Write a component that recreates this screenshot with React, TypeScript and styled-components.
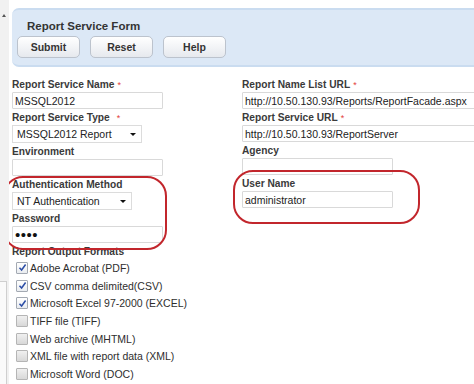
import styled, { createGlobalStyle } from 'styled-components';

const GlobalStyle = createGlobalStyle`
  html, body {
    margin: 0;
    padding: 0;
    background: #ffffff;
  }
  body {
    font-family: "Liberation Sans", Arial, sans-serif;
  }
`;

// 페이지 전체.
const Page = styled.div`
  display: flex;
  width: 474px;
  height: 384px;
  overflow: hidden;
  background: #ffffff;
`;

const SideRail = styled.div`
  width: 9px;
  flex: none;
  display: flex;
  flex-direction: column;
  background: #f1f1f1;
`;

const RailArrow = styled.div`
  margin: 14px 0 0 2px;
  width: 0;
  height: 0;
  border-left: 2.5px solid transparent;
  border-right: 2.5px solid transparent;
  border-bottom: 3px solid #555;
`;

const RailPanel = styled.div`
  margin-top: 264px;
  flex: 1;
  width: 6px;
  background: #fafafa;
  border-top: 1px solid #cfcfcf;
  border-right: 1px solid #cfcfcf;
`;

const Main = styled.div`
  flex: 1;
  min-width: 0;
  padding: 8px 0 0 3px;
  overflow: hidden;
`;

const Header = styled.div`
  margin-right: -10px;
  padding: 9px 0 7px 5px;
  background: #dce8f6;
  border-top: 2px solid #cadcf0;
  border-bottom: 2px solid #cadcf0;
  border-radius: 7px 0 0 7px;
`;

const Title = styled.div`
  padding-left: 10px;
  font-size: 11.5px;
  line-height: 14px;
  font-weight: bold;
  color: #343434;
`;

const Toolbar = styled.div`
  display: flex;
  gap: 10px;
  margin-top: 3px;
`;

const Button = styled.button`
  width: 63px;
  height: 22px;
  padding: 0;
  font-family: "Liberation Sans", Arial, sans-serif;
  font-size: 10.5px;
  font-weight: bold;
  color: #333;
  background: linear-gradient(#ffffff, #e6e9ee);
  border: 1px solid #bcc3cd;
  border-radius: 5px;
`;

const FormGrid = styled.div`
  display: grid;
  grid-template-columns: 230px 1fr;
  margin-top: 12px;
`;

const Column = styled.div`
  display: flex;
  flex-direction: column;
  min-width: 0;
`;

const Field = styled.div`
  display: flex;
  flex-direction: column;
  align-items: flex-start;
  margin-bottom: 3px;
`;

const Label = styled.div`
  font-size: 10.2px;
  line-height: 12px;
  font-weight: bold;
  color: #3a3a3a;
  margin-bottom: 1px;
  white-space: nowrap;
`;

const Required = styled.span<{ gap: number }>`
  color: #e3403a;
  font-size: 9px;
  font-weight: normal;
  margin-left: ${(p) => p.gap}px;
`;

const TextInput = styled.input<{ w: number }>`
  box-sizing: border-box;
  width: ${(p) => p.w}px;
  height: 17px;
  padding: 0 2px;
  margin: 0;
  font-family: "Liberation Sans", Arial, sans-serif;
  font-size: 10.5px;
  color: #222;
  background: #fff;
  border: 1px solid #d9d9d9;
  border-radius: 1px;
  outline: none;
`;

const PasswordInput = styled(TextInput)`
  font-size: 15px;
  letter-spacing: 0.5px;
  color: #111;
`;

const Select = styled.div<{ w: number }>`
  box-sizing: border-box;
  width: ${(p) => p.w}px;
  height: 18px;
  display: flex;
  align-items: center;
  justify-content: space-between;
  padding: 0 5px 0 4px;
  font-size: 10.5px;
  color: #222;
  background: #fff;
  border: 1px solid #dcdcdc;
  white-space: nowrap;
`;

const Caret = styled.span`
  width: 0;
  height: 0;
  border-left: 3px solid transparent;
  border-right: 3px solid transparent;
  border-top: 3px solid #111;
`;

// 빨간 타원 강조 표시.
const Highlight = styled.div<{ t: number; r: number; b: number; l: number }>`
  position: relative;
  align-self: flex-start;
  &::after {
    content: '';
    position: absolute;
    top: ${(p) => -p.t}px;
    right: ${(p) => -p.r}px;
    bottom: ${(p) => -p.b}px;
    left: ${(p) => -p.l}px;
    border: 2px solid #c2262c;
    border-radius: 20px;
    pointer-events: none;
  }
`;

const CheckList = styled.div`
  display: flex;
  flex-direction: column;
  padding-left: 4px;
`;

const CheckRow = styled.div`
  display: flex;
  align-items: center;
  height: 17.7px;
  gap: 2px;
  font-size: 10.5px;
  color: #2e2e2e;
  white-space: nowrap;
`;

const Box = styled.span<{ checked: boolean }>`
  box-sizing: border-box;
  width: 12px;
  height: 12px;
  display: flex;
  align-items: center;
  justify-content: center;
  border: 1px solid ${(p) => (p.checked ? '#a3a9b2' : '#b5b5b5')};
  border-radius: 1px;
  background: ${(p) =>
    p.checked ? 'linear-gradient(#ffffff, #e9ecf0)' : 'linear-gradient(#f0f0f0, #d8d8d8)'};
`;

const formats = [
  { text: 'Adobe Acrobat (PDF)', checked: true },
  { text: 'CSV comma delimited(CSV)', checked: true },
  { text: 'Microsoft Excel 97-2000 (EXCEL)', checked: true },
  { text: 'TIFF file (TIFF)', checked: false },
  { text: 'Web archive (MHTML)', checked: false },
  { text: 'XML file with report data (XML)', checked: false },
  { text: 'Microsoft Word (DOC)', checked: false },
];

const Check = ({ checked }: { checked: boolean }) => (
  <Box checked={checked}>
    {checked && (
      <svg width="9" height="9" viewBox="0 0 9 9">
        <path d="M1.5 4.8 L3.6 7 L7.6 1.5" fill="none" stroke="#2b4da6" strokeWidth="1.5" />
      </svg>
    )}
  </Box>
);

const App = () => {
  return (
    <Page>
      <GlobalStyle />
      <SideRail>
        <RailArrow />
        <RailPanel />
      </SideRail>
      <Main>
        <Header>
          <Title>Report Service Form</Title>
          <Toolbar>
            <Button>Submit</Button>
            <Button>Reset</Button>
            <Button>Help</Button>
          </Toolbar>
        </Header>

        <FormGrid>
          <Column>
            <Field>
              <Label>Report Service Name<Required gap={3}>*</Required></Label>
              <TextInput w={151} readOnly value="MSSQL2012" />
            </Field>
            <Field>
              <Label>Report Service Type<Required gap={7}>*</Required></Label>
              <Select w={130}>MSSQL2012 Report<Caret /></Select>
            </Field>
            <Field>
              <Label>Environment</Label>
              <TextInput w={151} readOnly value="" />
            </Field>
            <Highlight t={3} r={4} b={4} l={9}>
              <Field>
                <Label>Authentication Method</Label>
                <Select w={120}>NT Authentication<Caret /></Select>
              </Field>
              <Field>
                <Label>Password</Label>
                <PasswordInput w={151} type="password" readOnly value="abcd" />
              </Field>
            </Highlight>
            <Label>Report Output Formats</Label>
            <CheckList>
              {formats.map((f) => (
                <CheckRow key={f.text}>
                  <Check checked={f.checked} />
                  {f.text}
                </CheckRow>
              ))}
            </CheckList>
          </Column>

          <Column>
            <Field>
              <Label>Report Name List URL<Required gap={3}>*</Required></Label>
              <TextInput w={240} readOnly value="http://10.50.130.93/Reports/ReportFacade.aspx" />
            </Field>
            <Field>
              <Label>Report Service URL<Required gap={3}>*</Required></Label>
              <TextInput w={240} readOnly value="http://10.50.130.93/ReportServer" />
            </Field>
            <Field>
              <Label>Agency</Label>
              <TextInput w={151} readOnly value="" />
            </Field>
            <Highlight t={8} r={27} b={13} l={9}>
              <Field>
                <Label>User Name</Label>
                <TextInput w={151} readOnly value="administrator" />
              </Field>
            </Highlight>
          </Column>
        </FormGrid>
      </Main>
    </Page>
  );
};

export default App;
